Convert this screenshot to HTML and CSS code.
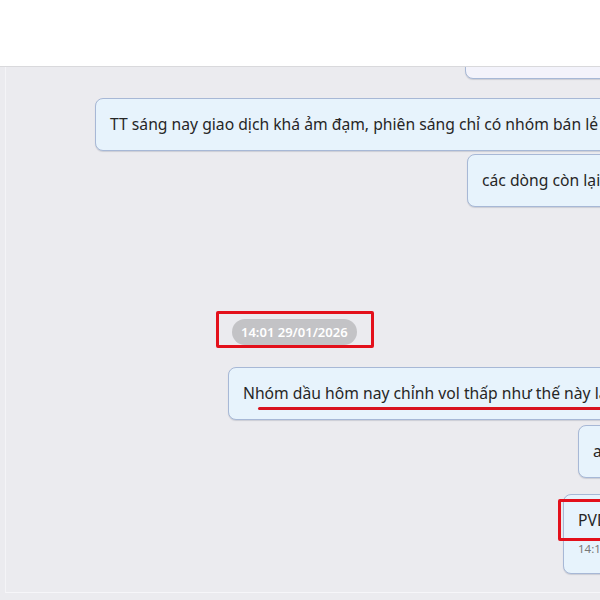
FILE: index.html
```html
<!DOCTYPE html>
<html lang="vi">
<head>
  <meta charset="UTF-8">
  <meta name="viewport" content="width=device-width, initial-scale=1.0">
  <title>Chat</title>
  <link rel="stylesheet" href="styles.css">
</head>
<body>
  <div class="header"></div>

  <div class="chat">
    <div class="row row-1">
      <div class="bubble bubble-light">Các mã dầu khí đang tích lũy chờ tin</div>
    </div>

    <div class="row row-2">
      <div class="bubble">TT sáng nay giao dịch khá ảm đạm, phiên sáng chỉ có nhóm bán lẻ và dầu khí giữ được sắc xanh</div>
    </div>

    <div class="row row-3">
      <div class="bubble">các dòng còn lại đều điều chỉnh nhẹ</div>
    </div>

    <div class="row row-time">
      <div class="mark-box">
        <span class="time-pill">14:01 29/01/2026</span>
      </div>
    </div>

    <div class="row row-4">
      <div class="bubble">
        Nhóm dầu hôm nay chỉnh vol thấp như thế này là tín hiệu tốt
        <span class="red-line"></span>
      </div>
    </div>

    <div class="row row-5">
      <div class="bubble">anh chị canh mua thêm nhé</div>
    </div>

    <div class="row row-6">
      <div class="bubble bubble-tall">
        <div>PVD, PVS, PVT</div>
        <div class="msg-time">14:11</div>
        <span class="mark-corner"></span>
      </div>
    </div>
  </div>
</body>
</html>
```

FILE: styles.css
```css
* {
  margin: 0;
  padding: 0;
  box-sizing: border-box;
}

body {
  font-family: "Noto Sans", "Open Sans", sans-serif;
  background: #ebebef;
  color: #222;
  width: 600px;
  height: 600px;
  overflow: hidden;
}

.header {
  height: 67px;
  background: #fff;
  border-bottom: 1px solid #d9d9dc;
}

.chat {
  height: 526px;
  overflow: hidden;
  border-left: 1px solid #f4f4f7;
  margin-left: 5px;
  border-bottom: 1px solid #f6f6f9;
}

.row {
  display: flex;
  white-space: nowrap;
}

.bubble {
  position: relative;
  flex: none;
  background: #e7f3fc;
  border: 1px solid #a7b8d6;
  border-radius: 8px;
  box-shadow: 0 1px 1px rgba(60, 70, 100, 0.18);
  padding: 14px 14px;
  font-size: 15.7px;
  line-height: 23px;
  color: #262626;
}

.bubble-light {
  background: #f3f3fb;
}

.row-1 { padding-left: 459px; margin-top: -41px; }
.row-2 { padding-left: 89px; margin-top: 19px; }
.row-3 { padding-left: 461px; margin-top: 3px; }
.row-time { padding-left: 210px; margin-top: 104px; }
.row-4 { padding-left: 222px; margin-top: 19px; }
.row-5 { padding-left: 572px; margin-top: 5px; }
.row-6 { padding-left: 557px; margin-top: 16px; }

.mark-box {
  border: 3px solid #e3101b;
  border-radius: 2px;
  padding: 5px 14px 0 13px;
  display: flex;
}

.time-pill {
  display: inline-block;
  background: #c3c3c6;
  color: #fff;
  font-size: 13px;
  font-weight: 600;
  line-height: 26px;
  height: 26px;
  padding: 0 9px;
  border-radius: 13px;
}

.red-line {
  position: absolute;
  left: 29px;
  right: -200px;
  top: 39px;
  height: 3px;
  border-radius: 2px;
  background: #d8131f;
}

.bubble-tall {
  padding: 14px 14px 16px;
}

.msg-time {
  font-size: 11.5px;
  line-height: 16px;
  color: #777;
  margin-top: 9px;
}

.mark-corner {
  position: absolute;
  left: -6px;
  top: 4px;
  width: 60px;
  height: 42px;
  border: 3px solid #e3101b;
  border-radius: 2px;
}
```
